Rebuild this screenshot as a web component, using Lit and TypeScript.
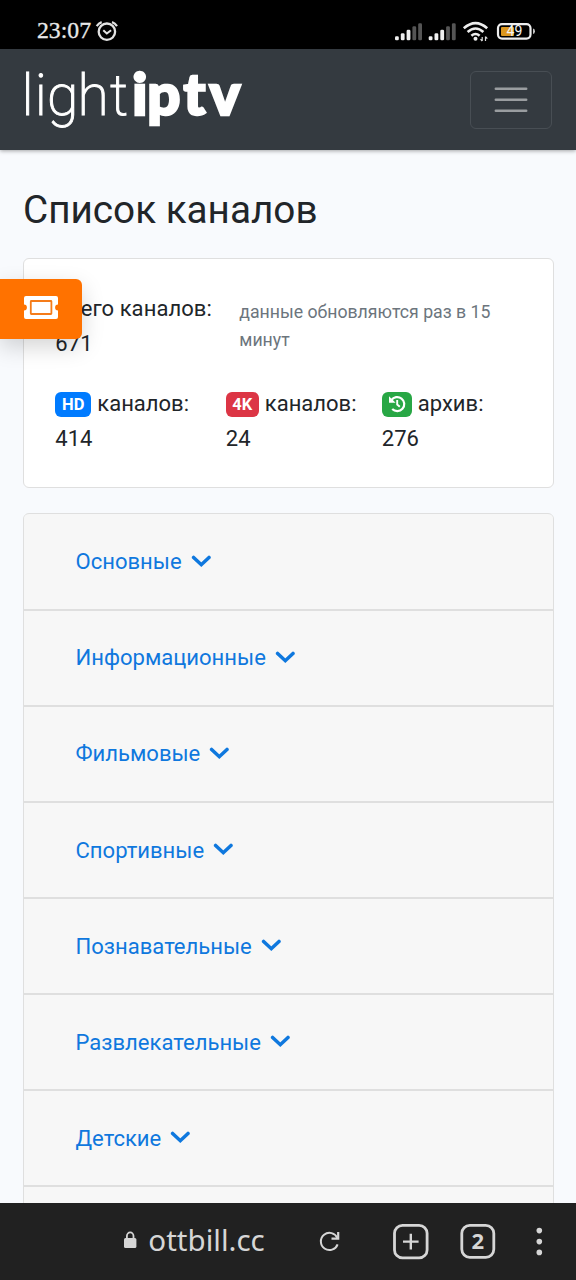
import { LitElement, html, css, svg } from "lit";
import { customElement, property } from "lit/decorators.js";

@customElement("status-bar")
class StatusBar extends LitElement {
  static styles = css`
    :host {
      display: flex;
      justify-content: space-between;
      height: 49px;
      background: #000;
    }
    svg {
      display: block;
    }
    .time {
      font: 23px "Liberation Serif", serif;
      fill: #e8e8e8;
      stroke: #e8e8e8;
      stroke-width: 0.3;
    }
    .level {
      font: 14px Roboto, sans-serif;
      fill: #f4f4f4;
    }
  `;

  signal(x: number) {
    const bars = [4, 7, 10.5, 14, 17];
    return bars.map(
      (h, i) => svg`<rect x=${x + i * 5.8} y=${40.2 - h} width="3.8" height=${h}
        rx="1.3" fill=${i < 3 ? "#f0f0f0" : "#555"} />`
    );
  }

  render() {
    return html`
      <svg width="140" height="49" fill="none" stroke="#e2e2e2">
        <text class="time" x="37" y="38.3" textLength="54" lengthAdjust="spacingAndGlyphs">23:07</text>
        <circle cx="106.9" cy="31.7" r="8.2" stroke-width="2.3" />
        <path d="M103.3 30.3l3.5 3.2 4.3-3.3" stroke-width="2" />
        <path d="M96.7 26.2q2-3.1 5-4.1M112 22.1q3 1 5 4.1" stroke-width="2.2" />
      </svg>
      <svg width="190" height="49" viewBox="386 0 190 49">
        ${this.signal(395)} ${this.signal(428.7)}
        <g fill="none" stroke="#eee" stroke-width="2.6">
          <path d="M463.8 28.2q11.7-10.3 23.4 0" />
          <path d="M467.6 32q7.9-7 15.8 0" />
          <path d="M471.4 35.8q4.1-3.6 8.2 0" />
        </g>
        <circle cx="475.5" cy="38.8" r="2" fill="#eee" />
        <path d="M482.2 37v4M480.5 39.2l1.7 1.8M485.5 41v-4.4M487.3 38.6l-1.8-2" stroke="#ddd" stroke-width="1.2" />
        <rect x="498" y="24.1" width="32.5" height="14.5" rx="4" fill="none" stroke="#eee" stroke-width="2.2" />
        <rect x="501" y="27" width="13" height="9" rx="1" fill="#dc971e" />
        <path d="M533.2 28.6q1.6.3 1.6 2.7t-1.6 2.7z" fill="#eee" />
        <text class="level" x="506.5" y="36.2" textLength="15.8">49</text>
      </svg>
    `;
  }
}

@customElement("site-header")
class SiteHeader extends LitElement {
  static styles = css`
    :host {
      display: flex;
      align-items: center;
      justify-content: space-between;
      box-sizing: border-box;
      height: 101px;
      padding: 0 24px 0 10px;
      background: #343a40;
      box-shadow: 0 1px 4px rgba(0, 0, 0, 0.35);
      position: relative;
    }
    .logo {
      fill: #fff;
    }
    .light {
      font: 200 57px Roboto, sans-serif;
      stroke: #fff;
      stroke-width: 0.9;
    }
    .bold {
      font: 900 58px Lato, sans-serif;
      stroke: #fff;
      stroke-width: 2.6;
    }
    .toggler {
      display: flex;
      align-items: center;
      justify-content: center;
      box-sizing: border-box;
      width: 82px;
      height: 58px;
      padding: 0;
      background: none;
      border: 1px solid #484e54;
      border-radius: 6px;
    }
  `;

  render() {
    return html`
      <svg class="logo" width="250" height="101" viewBox="10 49 250 101">
        <text class="light" x="21.5 34.7 47 77.5 110" y="114.8">light</text>
        <text class="bold" x="132.3 147.3 183.5 209.5" y="114.8">iptv</text>
      </svg>
      <button class="toggler" aria-label="Меню">
        <svg width="34" height="26" stroke="#9a9da0" stroke-width="2.5" stroke-linecap="round">
          <path d="M1.8 1.8h30.4M1.8 12.8h30.4M1.8 23.8h30.4" />
        </svg>
      </button>
    `;
  }
}

@customElement("channel-stats")
class ChannelStats extends LitElement {
  static styles = css`
    :host {
      display: block;
      box-sizing: border-box;
      height: 230px;
      padding: 31.5px 31px 0 31.3px;
      background: #fff;
      border: 1px solid #dfdfdf;
      border-radius: 6px;
      font-size: 22px;
      line-height: 35px;
    }
    .row {
      display: flex;
      margin-bottom: 25px;
    }
    .total {
      width: 184px;
      letter-spacing: 0.07px;
      white-space: nowrap;
    }
    .note {
      flex: 1;
      padding-top: 7px;
      font-size: 17.7px;
      line-height: 28px;
      color: #6c757d;
    }
    .hd {
      width: 170.5px;
    }
    .uhd {
      width: 156px;
    }
    .line {
      display: flex;
      align-items: center;
      gap: 6px;
      white-space: nowrap;
    }
    .badge {
      display: flex;
      align-items: center;
      justify-content: center;
      height: 25px;
      margin-top: 2px;
      border-radius: 6px;
      color: #fff;
      font-size: 16.5px;
      font-weight: 700;
    }
    .blue {
      width: 36px;
      background: #007bff;
    }
    .red {
      width: 33px;
      background: #dc3545;
    }
    .green {
      width: 30px;
      background: #28a745;
    }
  `;

  render() {
    return html`
      <div class="row">
        <div class="total">Всего каналов:<br />671</div>
        <div class="note">данные обновляются раз в 15 минут</div>
      </div>
      <div class="row">
        <div class="hd">
          <div class="line"><span class="badge blue">HD</span><span class="label">каналов:</span></div>
          414
        </div>
        <div class="uhd">
          <div class="line"><span class="badge red">4K</span><span class="label">каналов:</span></div>
          24
        </div>
        <div>
          <div class="line">
            <span class="badge green">
              <svg width="18" height="18" fill="none" stroke="#fff" stroke-width="2.2">
                <path d="M3.4 5.2a7 7 0 1 1 .8 8.7" />
                <path d="M9.2 5v4.6l2.6 2.2" stroke-width="1.9" />
                <path d="M1 1.2v6.5h6.6z" fill="#fff" stroke="none" />
              </svg>
            </span>
            <span class="label">архив:</span>
          </div>
          276
        </div>
      </div>
    `;
  }
}

@customElement("category-row")
class CategoryRow extends LitElement {
  static styles = css`
    :host {
      display: flex;
      align-items: center;
      gap: 9px;
      box-sizing: border-box;
      height: 96.1px;
      padding: 0 51px 0 51.5px;
      background: #f7f7f7;
      border-bottom: 2px solid #dfdfdf;
      color: #0f78de;
      font-size: 22.05px;
    }
  `;

  @property() label = "";

  render() {
    return html`
      <span>${this.label}</span>
      <svg width="21" height="14" fill="none" stroke="currentColor" stroke-width="3.5" stroke-linecap="round">
        <path d="M2.6 2.4l7.7 7.3 7.7-7.3" />
      </svg>
    `;
  }
}

@customElement("browser-bar")
class BrowserBar extends LitElement {
  static styles = css`
    :host {
      display: flex;
      align-items: center;
      height: 77px;
      background: #212121;
      color: #d6d6d6;
    }
    .address {
      display: flex;
      align-items: center;
      width: 318px;
      padding-left: 123px;
      box-sizing: border-box;
    }
    .url {
      font-family: "Noto Sans", sans-serif;
      fill: currentColor;
      font-size: 28.5px;
    }
    .tabs {
      font: 700 22px "Noto Sans", sans-serif;
      fill: currentColor;
      stroke: none;
    }
  `;

  render() {
    return html`
      <div class="address">
        <svg width="14" height="77" fill="none" stroke="currentColor">
          <rect x="1" y="34.9" width="12.4" height="10.1" rx="1.5" fill="currentColor" stroke="none" />
          <path d="M3.9 35v-1.9a3.3 3.7 0 0 1 6.6 0V35" stroke-width="1.8" />
        </svg>
        <svg width="140" height="77">
          <text class="url" x="11.3" y="48.4" textLength="116.5" lengthAdjust="spacingAndGlyphs">ottbill.cc</text>
        </svg>
      </div>
      <svg width="258" height="77" viewBox="318 1203 258 77" fill="none" stroke="currentColor">
        <path d="M337.6 1244.3a8.6 8.6 0 1 1-.2-6.2" stroke-width="2" />
        <path d="M338.2 1232v6.7h-6.7" stroke-width="2.2" />
        <rect x="394.5" y="1225.3" width="32.6" height="32.6" rx="8" stroke-width="2.8" />
        <path d="M403 1241.6h15.6M410.8 1233.8v15.6" stroke-width="2.4" />
        <rect x="461.8" y="1225.3" width="32" height="32" rx="8" stroke-width="2.8" />
        <text class="tabs" x="471.6" y="1249.4">2</text>
        <g fill="currentColor" stroke="none">
          <circle cx="539.3" cy="1230.6" r="2.8" />
          <circle cx="539.3" cy="1241.6" r="2.8" />
          <circle cx="539.3" cy="1252.4" r="2.8" />
        </g>
      </svg>
    `;
  }
}

@customElement("app-root")
class AppRoot extends LitElement {
  static styles = css`
    :host {
      display: flex;
      flex-direction: column;
      position: relative;
      width: 576px;
      height: 1280px;
      overflow: hidden;
      background: #f8fafd;
      color: #212529;
      font-family: Roboto, sans-serif;
    }
    status-bar,
    site-header,
    browser-bar {
      flex: none;
    }
    main {
      flex: 1;
      min-height: 0;
      overflow: hidden;
      padding: 37px 22px 0 23px;
    }
    h1 {
      margin: 0 0 25px;
      font-size: 38.7px;
      font-weight: 400;
      line-height: 46px;
      white-space: nowrap;
    }
    .categories {
      margin-top: 25px;
      padding-top: 0.7px;
      background: #f7f7f7;
      border: 1px solid #dfdfdf;
      border-radius: 6px;
      overflow: hidden;
    }
    .ticket {
      position: absolute;
      left: 0;
      top: 279px;
      display: flex;
      box-sizing: border-box;
      width: 82px;
      height: 60px;
      padding: 17px 0 0 24px;
      background: #ff7200;
      border-radius: 0 6px 6px 0;
      box-shadow: 0 8px 22px rgba(0, 0, 0, 0.17);
    }
  `;

  categories = [
    "Основные",
    "Информационные",
    "Фильмовые",
    "Спортивные",
    "Познавательные",
    "Развлекательные",
    "Детские",
    "",
  ];

  render() {
    return html`
      <status-bar></status-bar>
      <site-header></site-header>
      <main>
        <h1>Список каналов</h1>
        <channel-stats></channel-stats>
        <div class="categories">
          ${this.categories.map((c) => html`<category-row label=${c}></category-row>`)}
        </div>
      </main>
      <browser-bar></browser-bar>
      <div class="ticket">
        <svg width="34" height="23" fill="#fff">
          <path d="M2 0h30a2 2 0 0 1 2 2v6.6a2.9 2.9 0 0 0 0 5.8V21a2 2 0 0 1-2 2H2a2 2 0 0 1-2-2v-6.6a2.9 2.9 0 0 0 0-5.8V2a2 2 0 0 1 2-2z" />
          <rect x="6.8" y="5" width="20.6" height="13" rx="0.5" stroke="#f57c1a" stroke-width="1.8" />
        </svg>
      </div>
    `;
  }
}
